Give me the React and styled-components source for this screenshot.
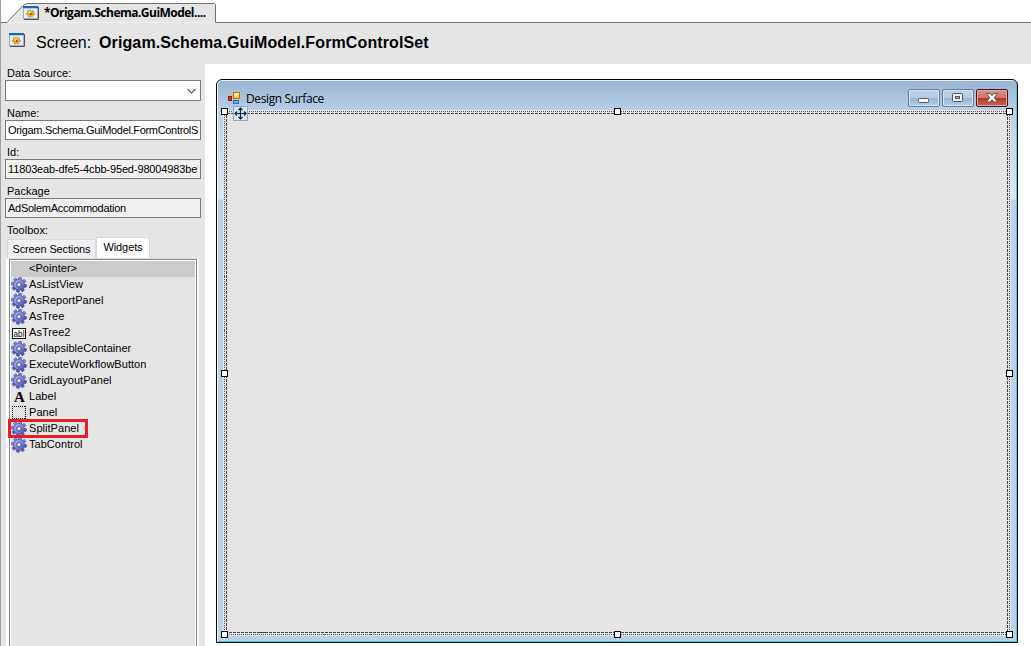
import React from "react";
import styled, { createGlobalStyle } from "styled-components";

const Global = createGlobalStyle`
  * { box-sizing: border-box; }
  html, body { margin: 0; padding: 0; background: #fff; overflow: hidden; }
  body { font: 11px/16px "Liberation Sans", Arial, sans-serif; color: #000; }
  svg { display: block; flex: none; }
`;

const Page = styled.div`
  width: 1031px;
  height: 646px;
  display: flex;
  flex-direction: column;
  border-left: 1px solid #a0a0a0;
  overflow: hidden;
`;

const TabStrip = styled.div`
  height: 23px;
  flex: none;
  position: relative;
`;

const TabShape = styled.svg`
  position: absolute;
  left: 0;
  top: 0;
`;

const DocumentTab = styled.div`
  position: relative;
  display: flex;
  align-items: center;
  height: 23px;
  padding: 2px 0 0 22px;
  gap: 5px;
  font: bold 12px/18px "Open Sans", "Noto Sans", sans-serif;
  letter-spacing: -0.52px;
  white-space: nowrap;
`;

const Header = styled.header`
  height: 41px;
  flex: none;
  background: #e5e5e5;
  display: flex;
  align-items: flex-start;
  padding: 10px 0 0 8px;
  font-size: 16px;
  line-height: 19px;
  white-space: nowrap;
`;

const HeaderKind = styled.span`
  margin-left: 11px;
  width: 63px;
`;

const HeaderName = styled.span`
  font-weight: bold;
  letter-spacing: 0.12px;
`;

const Body = styled.div`
  flex: 1;
  display: flex;
  min-height: 0;
`;

const Sidebar = styled.aside`
  width: 204px;
  flex: none;
  background: #e5e5e5;
  padding-left: 4px;
  display: flex;
  flex-direction: column;
`;

const FieldLabel = styled.label`
  display: block;
  height: ${(p) => p.$h || 19}px;
  padding: ${(p) => (p.$first ? 1 : 4)}px 0 0 2px;
  line-height: 16px;
  flex: none;
`;

const Field = styled.div`
  width: 196px;
  height: ${(p) => p.$h || 20}px;
  flex: none;
  border: 1px solid #7a7a7a;
  background: ${(p) => (p.$readOnly ? "#f0f0f0" : "#fff")};
  padding: 0 2px;
  display: flex;
  align-items: center;
  justify-content: ${(p) => (p.$combo ? "flex-end" : "flex-start")};
`;

const FieldText = styled.span`
  display: block;
  width: 191px;
  overflow: hidden;
  white-space: nowrap;
  letter-spacing: ${(p) => p.$spacing || 0}px;
`;

const Tabs = styled.div`
  display: flex;
  align-items: flex-end;
  height: 21px;
  flex: none;
  padding-left: 2px;
`;

const Tab = styled.div`
  width: ${(p) => p.$w}px;
  height: ${(p) => (p.$active ? 21 : 19)}px;
  background: ${(p) => (p.$active ? "#fff" : "#f0f0f0")};
  border: 1px solid #d9d9d9;
  border-bottom: 0;
  text-align: center;
  line-height: ${(p) => (p.$active ? 18 : 18)}px;
  letter-spacing: ${(p) => (p.$active ? -0.1 : -0.15)}px;
  white-space: nowrap;
`;

const TabPage = styled.div`
  width: 193px;
  flex: 1;
  margin-left: 1px;
  border: 1px solid #dcdcdc;
  border-left-color: #f6f6f6;
  border-right-color: #f6f6f6;
  border-bottom: 0;
  background: #fff;
  padding: 0 1px 0 2px;
  display: flex;
`;

const List = styled.div`
  flex: 1;
  border: 1px solid #828790;
  border-bottom: 0;
  background: #e5e5e5;
  box-shadow: inset 1px 1px #fff, inset -1px 0 #fff;
  padding: 1px 1px 0 1px;
`;

const Item = styled.div`
  position: relative;
  height: 16px;
  display: flex;
  align-items: center;
  background: ${(p) => (p.$selected ? "#cbcbcb" : "transparent")};
  gap: 2px;
  line-height: 15px;
  white-space: nowrap;
`;

const ItemIcon = styled.span`
  width: 16px;
  height: 16px;
  flex: none;
`;

const ItemText = styled.span`
  height: 16px;
  letter-spacing: 0.04px;
`;

const Highlight = styled.div`
  position: absolute;
  left: -3px;
  top: -2px;
  width: 80px;
  height: 19px;
  border: 3px solid #ed1c24;
  z-index: 2;
`;

const Workspace = styled.main`
  flex: 1;
  padding: 15px 0 0 11px;
  background: #fff;
`;

const Window = styled.section`
  position: relative;
  width: 802px;
  height: 564px;
  border: 1px solid #000;
  border-radius: 6px 6px 0 0;
  background: linear-gradient(#99b4d1, #b9d1ea 32px, #dce8f5 119px, #b9d1ea 120px);
  box-shadow: inset 1px 0 #fff, inset 0 1px #e8f0f8, inset -1px 0 #30cfe3, inset 0 -1px #30cfe3;
  padding: 0 7px 7px;
  display: flex;
  flex-direction: column;
`;

const TitleBar = styled.div`
  height: 31px;
  flex: none;
  display: flex;
  align-items: flex-start;
  padding: 10px 1px 0 2px;
  margin: 1px 1px 0;
  background: linear-gradient(#99b4d1, #b9d1ea);
`;

const WindowTitle = styled.span`
  flex: 1;
  margin: -1px 0 0 5px;
  font: 12px/17px "Open Sans", "Noto Sans", sans-serif;
  letter-spacing: -0.38px;
`;

const Buttons = styled.div`
  display: flex;
  gap: 2px;
  margin-top: -2px;
`;

const CaptionButton = styled.div`
  width: 32px;
  height: 18px;
  border: 1px solid ${(p) => (p.$close ? "#431422" : "#657b98")};
  border-radius: 2px;
  box-shadow: inset 0 0 0 1px ${(p) => (p.$close ? "#e3a89d" : "#d3e3f4")};
  background: ${(p) =>
    p.$close
      ? "linear-gradient(#d99186, #cf7566 48%, #b8361f 50%, #c96350)"
      : "linear-gradient(#bdd2e8, #b4cbe3 48%, #98b3d0 50%, #b5cde7)"};
  display: flex;
  align-items: center;
  justify-content: center;
`;

const Canvas = styled.div`
  position: relative;
  flex: 1;
  background: #e5e5e5;
`;

const Frame = styled.svg`
  position: absolute;
  left: -3px;
  top: -4px;
`;

const MoveHandle = styled.svg`
  position: absolute;
  left: 9px;
  top: -6px;
`;

function FormIcon() {
  return (
    <svg width="16" height="14" viewBox="0 0 16 14">
      <path d="M1 13.5H15.5V1" stroke="#555" fill="none" />
      <rect x=".5" y=".5" width="14" height="12" fill="#e9eef7" stroke="#9aacc8" />
      <rect width="15" height="2" fill="#1767bb" />
      <rect x="1" y="2" width="13" height="1" fill="#a9cef2" />
      <path d="M7 3.5L8.5 5l2-.5v2L12 8 10 9l-.5 2-2-.5-2 .8-.5-2.1L3 8 4.500 6.500l0-2L6.500 5Z" fill="#efa71b" stroke="#bd8124" strokeWidth=".5" />
      <path d="M7.500 4.500v4l-2-2" fill="#fff0b0" />
      <circle cx="7.800" cy="7.900" r="1" fill="#654b38" />
    </svg>
  );
}

const teeth = [0, 45, 90, 135, 180, 225, 270, 315];

function Gear() {
  return (
    <svg width="16" height="16" viewBox="0 0 16 16">
      <defs>
        <linearGradient id="gear" x2="1" y2="1">
          <stop stopColor="#b4b8f2" />
          <stop offset=".5" stopColor="#8286da" />
          <stop offset="1" stopColor="#4b4eae" />
        </linearGradient>
      </defs>
      {teeth.map((angle) => (
        <rect
          key={angle}
          x="6.5"
          y=".3"
          width="3"
          height="4"
          rx=".6"
          fill={angle > 60 && angle < 240 ? "#5558b4" : "#8286d4"}
          stroke="#4145a0"
          strokeWidth=".6"
          transform={`rotate(${angle + 10} 8 7.8)`}
        />
      ))}
      <circle cx="8" cy="7.8" r="5.3" fill="url(#gear)" stroke="#4a4da6" strokeWidth=".5" />
      <circle cx="8" cy="7.8" r="2.2" fill="#e5e5e5" stroke="#41459c" strokeWidth=".9" />
    </svg>
  );
}

function EditBoxIcon() {
  return (
    <svg width="16" height="16" viewBox="0 0 16 16">
      <rect x="1.5" y="3.5" width="13" height="10" fill="#fff" stroke="#111" />
      <text x="2.5" y="12" fontSize="9" textLength="11" lengthAdjust="spacingAndGlyphs" fontFamily="Liberation Sans, sans-serif">abl</text>
    </svg>
  );
}

function LabelIcon() {
  return (
    <svg width="16" height="16" viewBox="0 0 16 16">
      <text x="3" y="13" fontSize="15" fontWeight="bold" fontFamily="Liberation Serif, serif">A</text>
    </svg>
  );
}

function PanelIcon() {
  return (
    <svg width="16" height="16" viewBox="0 0 16 16" shapeRendering="crispEdges">
      <defs>
        <pattern id="dots" width="2" height="2" patternUnits="userSpaceOnUse">
          <rect width="2" height="2" fill="#f4f4f4" />
          <path d="M0 0h1v1H0zM1 1h1v1H1z" fill="#cfcfcf" />
        </pattern>
      </defs>
      <rect x="1.5" y="1.5" width="13" height="12" fill="url(#dots)" />
      <path d="M1 1.500H15M1.500 1V14M14.500 1V14M1 13.500H15" stroke="#000" strokeDasharray="1 1" />
    </svg>
  );
}

const icons = { gear: Gear, edit: EditBoxIcon, label: LabelIcon, panel: PanelIcon };

const widgets = [
  ["<Pointer>", null],
  ["AsListView", "gear"],
  ["AsReportPanel", "gear"],
  ["AsTree", "gear"],
  ["AsTree2", "edit"],
  ["CollapsibleContainer", "gear"],
  ["ExecuteWorkflowButton", "gear"],
  ["GridLayoutPanel", "gear"],
  ["Label", "label"],
  ["Panel", "panel"],
  ["SplitPanel", "gear"],
  ["TabControl", "gear"],
];

function Widget({ name, icon }) {
  const Icon = icons[icon];
  return (
    <Item $selected={name === "<Pointer>"}>
      <ItemIcon>{Icon && <Icon />}</ItemIcon>
      <ItemText>{name}</ItemText>
      {name === "SplitPanel" && <Highlight />}
    </Item>
  );
}

function AppIcon() {
  return (
    <svg width="14" height="14" viewBox="0 0 14 14">
      <path d="M.5 5V1.5H6M3 10.5v2h2" fill="none" stroke="#b5b9bf" />
      <rect x="6.5" y="1.5" width="6" height="6" fill="#f9c63c" stroke="#b27b10" />
      <path d="M7 2h5v2L7 6Z" fill="#ffe58c" />
      <rect x="1.5" y="5.5" width="3" height="4" fill="#d43c2d" stroke="#9b1713" />
      <rect x="6.5" y="9.5" width="5" height="3" fill="#6fa4ed" stroke="#376ac7" />
    </svg>
  );
}

function SelectionFrame() {
  const points = [];
  [3, 396, 788].forEach((x) =>
    [3, 265, 526].forEach((y) => {
      if (x !== 396 || y !== 265) points.push([x, y]);
    })
  );
  return (
    <Frame width="793" height="531" viewBox="0 0 793 531" shapeRendering="crispEdges">
      <rect x="3.5" y="3.5" width="785" height="523" fill="none" stroke="#e5e5e5" strokeWidth="3" />
      <rect x="3.5" y="3.5" width="785" height="523" fill="none" stroke="#555" strokeDasharray="1 1" />
      <rect x="5.5" y="5.5" width="781" height="519" fill="none" stroke="#444" strokeDasharray="3 1" />
      {points.map(([x, y]) => (
        <rect key={`${x}-${y}`} x={x - 2.5} y={y - 2.5} width="6" height="6" rx="1" fill="#fff" stroke="#000" />
      ))}
    </Frame>
  );
}

export default function App() {
  return (
    <Page>
      <Global />
      <TabStrip>
        <TabShape width="1030" height="23" viewBox="0 0 1030 23">
          <path d="M0 22.5H6L21.5 6Q24 3.5 27 3.5H213.5L214.5 4.5V22.5H1030" fill="#e5e5e5" stroke="#6f6f6f" />
        </TabShape>
        <DocumentTab>
          <FormIcon />
          <span>*Origam.Schema.GuiModel....</span>
        </DocumentTab>
      </TabStrip>
      <Header>
        <FormIcon />
        <HeaderKind>Screen:</HeaderKind>
        <HeaderName>Origam.Schema.GuiModel.FormControlSet</HeaderName>
      </Header>
      <Body>
        <Sidebar>
          <FieldLabel $h={16} $first>Data Source:</FieldLabel>
          <Field $h={21} $combo>
            <svg width="12" height="8" viewBox="0 0 12 8">
              <path d="M1.5 2L5.5 6l4-4" fill="none" stroke="#555" strokeWidth="1.1" />
            </svg>
          </Field>
          <FieldLabel>Name:</FieldLabel>
          <Field>
            <FieldText $spacing={-0.32}>Origam.Schema.GuiModel.FormControlSet</FieldText>
          </Field>
          <FieldLabel>Id:</FieldLabel>
          <Field $readOnly>
            <FieldText $spacing={-0.13}>11803eab-dfe5-4cbb-95ed-98004983be5f</FieldText>
          </Field>
          <FieldLabel>Package</FieldLabel>
          <Field $readOnly>
            <FieldText $spacing={-0.28}>AdSolemAccommodation</FieldText>
          </Field>
          <FieldLabel>Toolbox:</FieldLabel>
          <Tabs>
            <Tab $w={89}>Screen Sections</Tab>
            <Tab $w={54} $active>Widgets</Tab>
          </Tabs>
          <TabPage>
            <List>
              {widgets.map(([name, icon]) => (
                <Widget key={name} name={name} icon={icon} />
              ))}
            </List>
          </TabPage>
        </Sidebar>
        <Workspace>
          <Window>
            <TitleBar>
              <AppIcon />
              <WindowTitle>Design Surface</WindowTitle>
              <Buttons>
                <CaptionButton>
                  <svg width="12" height="10" viewBox="0 0 12 10">
                    <rect x=".5" y="5.5" width="10" height="4" rx="1" fill="#f4f4f4" stroke="#535666" />
                  </svg>
                </CaptionButton>
                <CaptionButton>
                  <svg width="12" height="10" viewBox="0 0 12 10">
                    <rect x=".5" y=".5" width="10" height="8" rx="1" fill="#f4f4f4" stroke="#535666" />
                    <rect x="3.5" y="3.5" width="4" height="2" fill="#a2bddb" stroke="#535666" />
                  </svg>
                </CaptionButton>
                <CaptionButton $close>
                  <svg width="12" height="10" viewBox="0 0 12 10">
                    <path d="M.5.5h3.3L6 2.6 8.2.5h3.3L8.300 4.8l3.200 4.1H8.2L6 6.900 3.8 8.9H.5l3.200-4.1Z" fill="#f8f8f8" stroke="#535666" />
                  </svg>
                </CaptionButton>
              </Buttons>
            </TitleBar>
            <Canvas>
              <SelectionFrame />
              <MoveHandle width="15" height="15" viewBox="0 0 15 15">
                <rect x=".5" y=".5" width="14" height="14" fill="#d8e6f5" stroke="#8ba5c3" />
                <path d="M7.5 2v11M2 7.5h11M5.5 4l2-2 2 2M5.5 11l2 2 2-2M4 5.5l-2 2 2 2M11 5.5l2 2-2 2" fill="none" stroke="#142333" strokeWidth="1.2" />
              </MoveHandle>
            </Canvas>
          </Window>
        </Workspace>
      </Body>
    </Page>
  );
}
